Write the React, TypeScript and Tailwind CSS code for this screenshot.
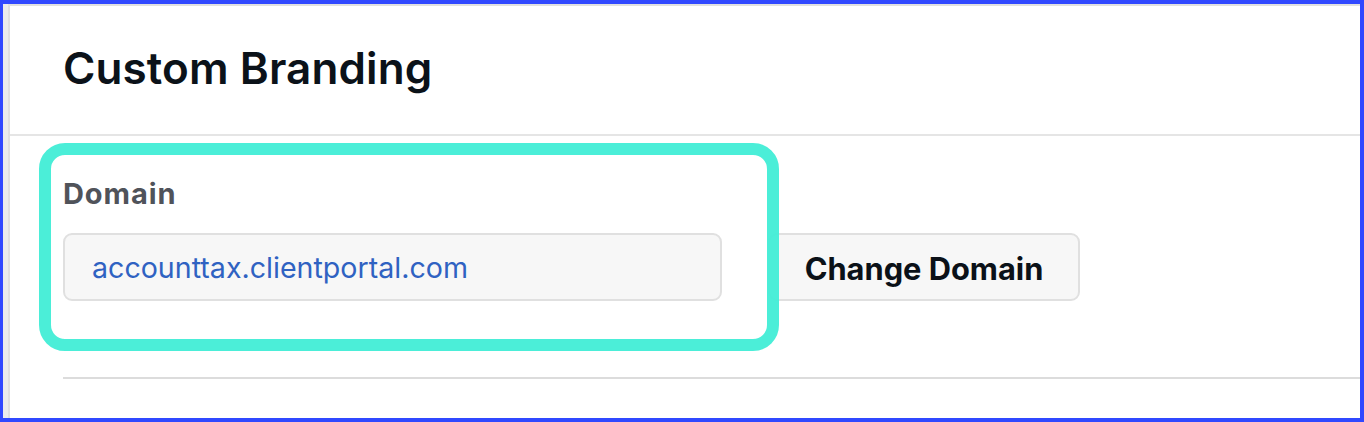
import React from "react";

export default function App() {
  return (
    <div
      className="relative w-[1364px] h-[422px] overflow-hidden border-t-4 border-l-[3px] border-r-4 border-b-4 border-[#3048ff] bg-[#ececec] pl-[5px]"
      style={{ fontFamily: "Inter, 'Noto Sans', sans-serif" }}
    >
      <div className="h-full bg-white border-t-2 border-l-2 border-[#e0e0e0] flex flex-col">
        <div className="pl-[53px] pt-[38px] pb-[42px] border-b-2 border-[#e5e5e5]">
          <h1 className="text-[44px] leading-[48px] font-semibold text-[#0b1219] tracking-[0.1px]">
            Custom Branding
          </h1>
        </div>
        <div className="pl-[53px] pt-[40px] flex flex-col">
          <label className="text-[29px] leading-[36px] font-bold text-[#50535a] tracking-[0.9px]">Domain</label>
          <div className="mt-[21px] flex items-center gap-[46px]">
            <div className="w-[659px] h-[68px] rounded-[9px] border-2 border-[#e0e0e0] bg-[#f7f7f7] flex items-center pl-[27px]">
              <span className="text-[28.6px] leading-[34px] pt-[2px] text-[#2f62c2]">accounttax.clientportal.com</span>
            </div>
            <button className="w-[312px] h-[68px] rounded-[9px] border-2 border-[#e0e0e0] bg-[#f7f7f7] flex items-center justify-center">
              <span className="text-[30.8px] leading-[36px] pt-[3px] font-bold text-[#0b1118]">Change Domain</span>
            </button>
          </div>
          <div className="mt-[76px] h-[2px] bg-[#dcdcdc]" />
        </div>
      </div>
      <div className="absolute left-[36px] top-[139px] w-[740px] h-[208px] rounded-[26px] border-[12px] border-[#41edd6]/95 pointer-events-none" />
    </div>
  );
}
